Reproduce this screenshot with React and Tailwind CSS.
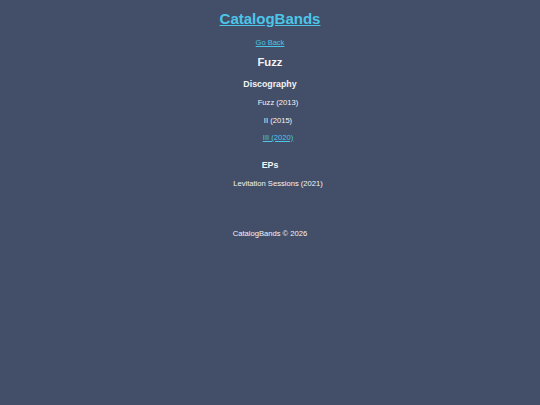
export default function App() {
  const albums = [
    { title: "Fuzz (2013)" },
    { title: "II (2015)" },
    { title: "III (2020)", link: true },
  ];

  return (
    <div className="min-h-[405px] bg-[#434e68] text-[#f3f4f6] font-['Liberation_Sans',Arial,sans-serif] text-center pt-[10px] antialiased">
      <header>
        <h1 className="text-[15px] leading-[17.25px] font-bold">
          <a href="#" className="text-[#4cc6e8] underline">
            CatalogBands
          </a>
        </h1>
      </header>

      <main>
        <a href="#" className="block mt-[11.5px] text-[7.5px] leading-[8.6px] text-[#4cc6e8] underline">
          Go Back
        </a>

        <h2 className="mt-[9px] text-[11.25px] leading-[12.9px] font-bold">Fuzz</h2>

        <h3 className="mt-[9.4px] text-[8.8px] leading-[10.1px] font-bold">Discography</h3>
        <ul className="mt-[10.6px] pl-[16px] flex flex-col gap-[8.7px] text-[7.6px] leading-[8.6px]">
          {albums.map((a) => (
            <li key={a.title}>
              {a.link ? (
                <a href="#" className="text-[#4cc6e8] underline">
                  {a.title}
                </a>
              ) : (
                a.title
              )}
            </li>
          ))}
        </ul>

        <h3 className="mt-[17.8px] text-[8.8px] leading-[10.1px] font-bold">EPs</h3>
        <ul className="mt-[10px] pl-[16px] text-[7.6px] leading-[8.6px]">
          <li>Levitation Sessions (2021)</li>
        </ul>
      </main>

      <footer className="mt-[41px] text-[7.6px] leading-[8.6px]">
        CatalogBands © 2026
      </footer>
    </div>
  );
}
